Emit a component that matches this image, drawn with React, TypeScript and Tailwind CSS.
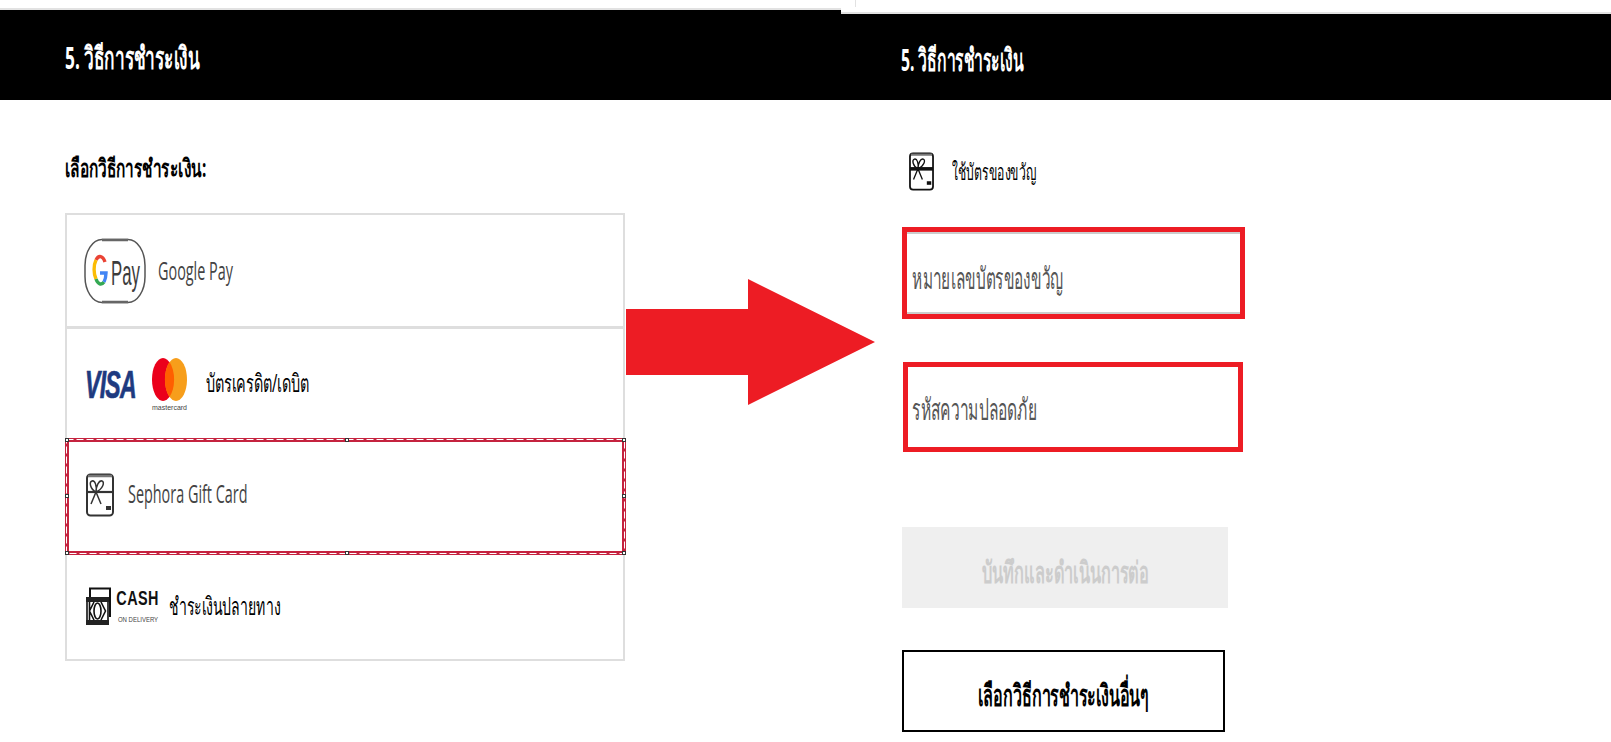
const font = "font-['Noto_Sans','DejaVu_Sans',sans-serif]";
const openSans = "font-['Open_Sans',sans-serif]";

function GPayIcon() {
  return (
    <svg width="62" height="66" viewBox="0 0 62 66" className="shrink-0">
      <rect x="1" y="1.5" width="60" height="63" rx="17" ry="26" fill="#fff" stroke="#555" strokeWidth="1.5" />
      <path d="M18 2 H44 M18 64 H44" stroke="#666" strokeWidth="2.4" />
      <path d="M21 24 A6 13 0 0 0 12 22" fill="none" stroke="#ea4335" strokeWidth="3.4" />
      <path d="M12 22 A6 13 0 0 0 12 41" fill="none" stroke="#fbbc04" strokeWidth="3.4" />
      <path d="M12 41 A6 13 0 0 0 20 44" fill="none" stroke="#34a853" strokeWidth="3.4" />
      <path d="M20 44 A6 13 0 0 0 22 35 H16" fill="none" stroke="#4285f4" strokeWidth="3.4" />
      <text transform="translate(27 47) scale(0.7 1.45)" fontFamily="Liberation Sans, sans-serif" fontSize="24" fill="#3c3c3c">Pay</text>
    </svg>
  );
}

function VisaLogo() {
  return (
    <span className="block w-[48px] origin-left translate-y-[2px] scale-x-[0.72] scale-y-[1.2] whitespace-nowrap font-['Liberation_Sans',sans-serif] text-[32px] leading-[31px] font-bold italic tracking-[-1px] text-[#1e3a80] [-webkit-text-stroke:0.6px_#1e3a80]">
      VISA
    </span>
  );
}

function MasterLogo() {
  return (
    <div className="flex w-[35px] shrink-0 flex-col items-center">
      <svg width="35" height="43" viewBox="0 0 35 43">
        <ellipse cx="11" cy="21.5" rx="11" ry="21.5" fill="#eb001b" />
        <ellipse cx="24" cy="21.5" rx="11" ry="21.5" fill="#f79e1b" />
        <path d="M17.5 4 A11 21.5 0 0 1 17.5 39 A11 21.5 0 0 1 17.5 4" fill="#ff5f00" />
      </svg>
      <span className="mt-[3px] whitespace-nowrap font-['Liberation_Sans',sans-serif] text-[7px] leading-[8px] text-[#444]">mastercard</span>
    </div>
  );
}

function GiftIcon({ dark = false, className = "" }: { dark?: boolean; className?: string }) {
  const c = dark ? "#111" : "#333";
  return (
    <svg viewBox="0 0 28 44" className={className}>
      <rect x="1" y="1.5" width="26" height="41" rx="3.5" fill="#fff" stroke={c} strokeWidth="2" />
      <path d="M2 3 H26" stroke="#777" strokeWidth="2.5" />
      <path d="M1 19 H27" stroke={c} strokeWidth={dark ? 4 : 2.2} />
      <path d="M10 19 C4 16 3 9 6 8 C9 7 11 13 10 19 C10 13 13 7 16 8 C19 9 17 16 10 19 M10 19 L5 31 M10 19 L15 31" fill="none" stroke={c} strokeWidth="1.5" />
      <rect x="20" y="33" width="5" height="4" fill={c} />
    </svg>
  );
}

function CodLogo() {
  return (
    <div className="flex w-[73px] shrink-0 items-start gap-[6px]">
      <svg width="25" height="38" viewBox="0 0 25 38" className="shrink-0">
        <path d="M4 10 V1.5 H24 V30" fill="none" stroke="#111" strokeWidth="2" />
        <rect x="0" y="10" width="23" height="5" fill="#222" />
        <rect x="0" y="33" width="23" height="5" fill="#222" />
        <path d="M1 15 V33 M22 15 V33" stroke="#111" strokeWidth="1.6" />
        <path d="M8 15 L3.5 24 L8 33 M3.5 15 V33 M15 15 L19.5 24 L15 33" fill="none" stroke="#111" strokeWidth="1.6" />
        <ellipse cx="11.5" cy="24" rx="3.5" ry="8" fill="none" stroke="#111" strokeWidth="1.6" />
      </svg>
      <div className="flex w-[42px] flex-col items-center pt-[3px] font-['Liberation_Sans',sans-serif]">
        <span className="scale-x-[0.9] scale-y-[1.25] text-[16px] leading-[18px] font-bold tracking-[0.5px] text-[#111]">CASH</span>
        <span className="mt-[8px] scale-y-[1.2] whitespace-nowrap text-[6px] leading-[9px] text-[#444]">ON DELIVERY</span>
      </div>
    </div>
  );
}

function Arrow() {
  return (
    <svg width="250" height="127" viewBox="0 0 250 127" className="absolute top-[279px] left-[625px]">
      <path d="M1 30 H123 V0 L250 63 L123 126 V96 H1 Z" fill="#ed1c24" />
    </svg>
  );
}

function Handle({ className }: { className: string }) {
  return <span className={`absolute size-[4px] border border-[#333] bg-white ${className}`} />;
}

export default function App() {
  return (
    <div className="relative flex h-[742px] w-[1611px] overflow-hidden bg-white">
      {/* left screenshot */}
      <div className="w-[841px] shrink-0 pt-[8px]">
        <div className="flex h-[92px] items-center border-t-2 border-[#e2e2e2] bg-black pl-[65px]">
          <h2 className={`${font} origin-left translate-y-[2px] scale-x-[0.72] scale-y-[1.3] whitespace-nowrap text-[24px] leading-[30px] font-bold text-white`}>5. วิธีการชำระเงิน</h2>
        </div>
        <p className={`${font} mt-[55px] ml-[65px] origin-left scale-x-[0.77] scale-y-[1.25] whitespace-nowrap text-[20px] leading-[26px] font-bold text-black`}>
          เลือกวิธีการชำระเงิน:
        </p>
        <div className="relative mt-[32px] ml-[65px] w-[560px] border-2 border-[#dedede]">
          <div className="flex h-[114px] items-center gap-[12px] border-b-[3px] border-[#dedede] pl-[17px]">
            <GPayIcon />
            <span className={`${openSans} origin-left scale-x-[0.72] scale-y-[1.25] whitespace-nowrap text-[20px] text-[#444]`}>Google Pay</span>
          </div>
          <div className="flex h-[109px] items-center pl-[18px]">
            <VisaLogo />
            <div className="ml-[19px] pt-[3px]"><MasterLogo /></div>
            <span className={`${font} ml-[19px] origin-left scale-x-[0.76] scale-y-[1.3] whitespace-nowrap text-[19px] text-black`}>บัตรเครดิต/เดบิต</span>
          </div>
          <div className="flex h-[115px] items-center gap-[14px] pl-[19px]">
            <GiftIcon className="h-[44px] w-[28px] shrink-0 -translate-y-[1px]" />
            <span className={`${openSans} origin-left -translate-y-[2px] scale-x-[0.72] scale-y-[1.25] whitespace-nowrap text-[20px] text-[#444]`}>Sephora Gift Card</span>
          </div>
          <div className="flex h-[106px] items-center pl-[19px]">
            <CodLogo />
            <span className={`${font} ml-[10px] origin-left scale-x-[0.74] scale-y-[1.3] whitespace-nowrap text-[19px] text-black`}>ชำระเงินปลายทาง</span>
          </div>

          {/* selection marquee drawn over the gift card row */}
          <div className="absolute top-[223px] -left-[2px] h-[117px] w-[561px] border-[4px] border-[#c5233f]">
            <svg width="561" height="117" className="absolute -top-[4px] -left-[4px]">
              <rect x="1.5" y="1.5" width="558" height="114" fill="none" stroke="#fff" strokeDasharray="7 3" />
            </svg>
            <Handle className="-top-[4px] -left-[4px]" />
            <Handle className="-top-[4px] left-[276px]" />
            <Handle className="-top-[4px] -right-[4px]" />
            <Handle className="top-[52px] -left-[4px]" />
            <Handle className="top-[52px] -right-[4px]" />
            <Handle className="-bottom-[4px] -left-[4px]" />
            <Handle className="-bottom-[4px] left-[276px]" />
            <Handle className="-bottom-[4px] -right-[4px]" />
          </div>
        </div>
      </div>

      {/* right screenshot */}
      <div className="relative min-w-0 flex-1 pt-[12px]">
        <span className="absolute top-0 left-[14px] h-[7px] w-px bg-[#e2e2e2]" />
        <div className="flex h-[88px] items-center border-t-2 border-[#e2e2e2] bg-black pl-[60px]">
          <h2 className={`${font} origin-left translate-y-[2px] scale-x-[0.655] scale-y-[1.3] whitespace-nowrap text-[24px] leading-[30px] font-bold text-white`}>5. วิธีการชำระเงิน</h2>
        </div>
        <div className="ml-[61px]">
          <div className="mt-[52px] flex items-center gap-[18px] pl-[7px]">
            <GiftIcon dark className="h-[39px] w-[25px] shrink-0" />
            <span className={`${font} origin-left scale-x-[0.72] scale-y-[1.3] whitespace-nowrap text-[17px] text-black`}>ใช้บัตรของขวัญ</span>
          </div>
          <div className="mt-[36px] flex h-[92px] w-[343px] items-center border-[5px] border-[#ed1c24] pl-[5px] shadow-[inset_0_2px_0_#ccc,inset_0_-2px_0_#ccc]">
            <span className={`${font} origin-left translate-y-[4px] scale-x-[0.7] scale-y-[1.35] whitespace-nowrap text-[22px] text-[#555]`}>หมายเลขบัตรของขวัญ</span>
          </div>
          <div className="mt-[43px] ml-[1px] flex h-[90px] w-[340px] items-center border-[5px] border-[#ed1c24] pl-[4px]">
            <span className={`${font} origin-left translate-y-[1px] scale-x-[0.71] scale-y-[1.35] whitespace-nowrap text-[22px] text-[#555]`}>รหัสความปลอดภัย</span>
          </div>
          <div className={`${font} mt-[75px] flex h-[81px] w-[326px] items-center justify-center bg-[#efefef] text-[#ccc]`}>
            <span className="translate-y-[4px] scale-x-[0.68] scale-y-[1.25] whitespace-nowrap text-[24px] font-bold">บันทึกและดำเนินการต่อ</span>
          </div>
          <div className={`${font} mt-[42px] flex h-[82px] w-[323px] items-center justify-center border-2 border-black text-black`}>
            <span className="translate-y-[4px] scale-x-[0.67] scale-y-[1.25] whitespace-nowrap text-[24px] font-semibold">เลือกวิธีการชำระเงินอื่นๆ</span>
          </div>
        </div>
      </div>
      <Arrow />
    </div>
  );
}
